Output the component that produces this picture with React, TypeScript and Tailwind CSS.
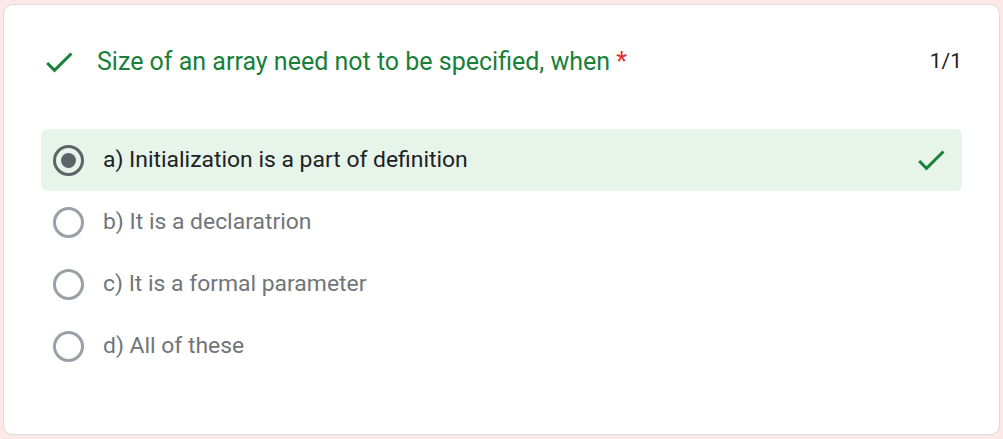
const options = [
  { label: "a) Initialization is a part of definition", selected: true, correct: true },
  { label: "b) It is a declaratrion", selected: false, correct: false },
  { label: "c) It is a formal parameter", selected: false, correct: false },
  { label: "d) All of these", selected: false, correct: false },
];

function Check({ className }: { className?: string }) {
  return (
    <svg className={className} viewBox="0 0 24 24" fill="currentColor">
      <path d="M9 16.17L4.83 12l-1.42 1.41L9 19 21 7l-1.41-1.41z" />
    </svg>
  );
}

export default function App() {
  return (
    <div className="h-[439px] w-[1003px] bg-[#fde8e8] pl-[3px] pt-[4px] font-['Roboto',sans-serif]">
      <div className="h-[431px] w-[997px] rounded-[10px] border border-[#dadce0] bg-white px-[37px] pt-[34px]">
        <div className="flex h-[46px] items-center">
          <Check className="h-9 w-9 text-[#188038]" />
          <div className="ml-[20px] flex-1 text-[25px] text-[#188038]">
            Size of an array need not to be specified, when <span className="text-[#d93025]">*</span>
          </div>
          <div className="text-[21px] text-[#202124]">1/1</div>
        </div>

        <div className="mt-[44px] flex flex-col">
          {options.map((o) => (
            <div
              key={o.label}
              className={
                o.selected
                  ? "flex h-[62px] items-center rounded-[6px] bg-[#e6f4ea] pl-[12px] pr-[13px]"
                  : "flex h-[62px] items-center pl-[12px] pr-[13px]"
              }
            >
              <div
                className={
                  o.selected
                    ? "flex h-[31px] w-[31px] items-center justify-center rounded-full border-[3px] border-[#5f6368]"
                    : "flex h-[31px] w-[31px] items-center justify-center rounded-full border-[3px] border-[#9aa0a6]"
                }
              >
                {o.selected && <div className="h-[15px] w-[15px] rounded-full bg-[#5f6368]" />}
              </div>
              <div
                className={
                  o.selected
                    ? "ml-[19px] flex-1 pt-[1px] text-[22.9px] text-[#202124]"
                    : "ml-[19px] flex-1 pt-[1px] text-[22.9px] text-[#70757a]"
                }
              >
                {o.label}
              </div>
              {o.correct && <Check className="h-9 w-9 text-[#188038]" />}
            </div>
          ))}
        </div>
      </div>
    </div>
  );
}
